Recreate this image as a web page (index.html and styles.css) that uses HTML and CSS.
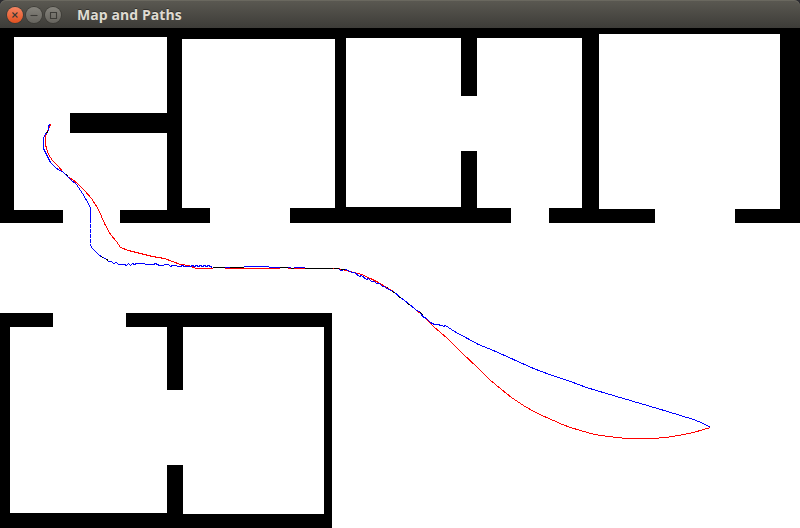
FILE: index.html
```html
<!DOCTYPE html>
<html lang="en">
<head>
<meta charset="utf-8">
<title>Map and Paths</title>
<link rel="stylesheet" href="styles.css">
</head>
<body>
<main class="window">
  <header class="titlebar">
    <div class="controls">
      <span class="control close"><svg viewBox="0 0 16 16"><path d="M5.5 5.5l5 5m0-5l-5 5"/></svg></span>
      <span class="control"><svg viewBox="0 0 16 16"><path d="M4.5 8.5h7"/></svg></span>
      <span class="control"><svg viewBox="0 0 16 16"><path d="M5.5 5.5h6v6h-6z"/></svg></span>
    </div>
    <h1 class="title">Map and Paths</h1>
  </header>
  <svg class="map" viewBox="0 28 800 500" shape-rendering="crispEdges">
    <path class="wall" d="M0 28H800V223H0Z"/>
    <path class="wall" d="M0 313H332V528H0Z"/>
    <g class="floor">
      <path d="M14 37H167V113H70V133H167V210H120V223H63V210H14Z"/>
      <path d="M182 39H335V208H290V223H210V208H182Z"/>
      <path d="M346 38H461V96H477V38H582V208H549V223H511V208H477V151H461V207H346Z"/>
      <path d="M599 34H780V209H735V223H655V209H599Z"/>
      <path d="M10 327H53V313H126V327H167V390H183V327H324V514H183V465H167V513H10Z"/>
    </g>
    <g transform="translate(.5 .5)">
      <polyline class="path red" points="50,124 47,131 45,136 45,144 46,148 48,154 52,160 58,166 62,171 68,177 72,179 77,183 84,190 91,198 98,209 104,223 110,234 116,241 120,247 128,250 140,253 152,256 164,258 172,261 180,264 188,265 196,268 212,268"/>
      <polyline class="path red" points="224,268 279,268"/>
      <polyline class="path red" points="287,268 338,268 345,270 350,271 361,274 370,278 378,282 386,287 393,291 400,297 408,303 415,309 420,313 427,320 433,326 440,332 447,338 462,353 477,367 489,379 501,389 511,397 523,405 535,412 546,417 553,420 562,424 570,427 580,430 594,434 608,436 626,438 653,438 665,437 678,435 693,432 710,427"/>
      <polyline class="path blue" points="50,124 48,125 48,130 44,135 43,138 43,148 46,154 50,162 56,168 63,172 70,179 76,184 82,193 88,203 90,208 90,222"/>
      <polyline class="path blue dashed" points="90,223 90,245"/>
      <polyline class="path blue" points="90,245 92,248 98,254 102,257 105,258 108,261 111,261 113,263 116,262 118,264 124,264 126,265 128,263 130,265 132,263 134,264 136,263 153,264 155,263 157,264 159,265 168,264 170,266 172,265 180,266 182,265 184,266 190,266 192,265 194,266 196,265 198,266 200,265 202,266 204,265 206,266 208,265 210,266 212,267"/>
      <polyline class="path blue" points="224,267 243,267"/>
      <polyline class="path blue" points="243,266 268,266"/>
      <polyline class="path blue" points="268,267 290,267"/>
      <polyline class="path blue" points="293,267 304,267"/>
      <polyline class="path blue" points="338,268 340,270 346,269 351,272 354,272 359,276 361,275 366,279 368,278 371,281 374,281 376,283 379,283 382,286 384,286 386,288 393,291 400,297 408,303 415,309 420,312 422,316 426,318 430,322 434,324 438,324 440,325 442,325 443,326 445,325 454,331 467,338 478,344 493,350 513,359 533,368 549,374 570,381 586,387 606,393 640,403 667,411 693,419 703,423 710,427"/>
      <g class="path black">
        <path d="M47 131L46 133M66 174L68 176M101 256L103 258M106 259L108 260"/>
        <path d="M212 267H224M229 267H243M279 267H287M304 268H332M333 268H338M290 268H293"/>
        <path d="M340 269H344M386 287L387 287M392 291L395 293M398 296L401 298M407 303L410 305M420 312L423 315"/>
      </g>
    </g>
  </svg>
</main>
</body>
</html>
```
FILE: styles.css
```css
body {
  margin: 0;
  background: #2b2b30;
}

.window {
  display: flex;
  flex-direction: column;
  width: 800px;
  height: 528px;
}

.titlebar {
  display: flex;
  align-items: center;
  gap: 16px;
  box-sizing: border-box;
  height: 28px;
  padding: 1px 7px 0;
  border-radius: 6px 6px 0 0;
  background: linear-gradient(#5b5952, #3d3c38);
  box-shadow: inset 0 1px #6a685f;
}

.controls {
  display: flex;
  gap: 3px;
}

.control {
  box-sizing: border-box;
  width: 16px;
  height: 16px;
  border-radius: 50%;
  background: linear-gradient(#85837c, #66645e);
  box-shadow: 0 0 0 .7px #393833;
}

.control.close {
  background: linear-gradient(#f48563, #e2511f);
}

.control svg {
  display: block;
  width: 16px;
  height: 16px;
  fill: none;
  stroke: #3c3b37;
  stroke-width: 1.1;
}

.title {
  margin: 0;
  color: #dfdbd2;
  font: bold 14px/20px "Open Sans", "Noto Sans", sans-serif;
  letter-spacing: .08px;
  text-shadow: 0 -1px #33322e;
  white-space: nowrap;
}

.map {
  display: block;
  width: 800px;
  height: 500px;
  background: #fff;
}

.wall {
  fill: #000;
}

.floor {
  fill: #fff;
}

.path {
  fill: none;
  stroke-width: 1;
}

.red {
  stroke: #f00;
}

.blue {
  stroke: #00f;
}

.black {
  stroke: #000;
}

.dashed {
  stroke-dasharray: 4 1;
}
```
